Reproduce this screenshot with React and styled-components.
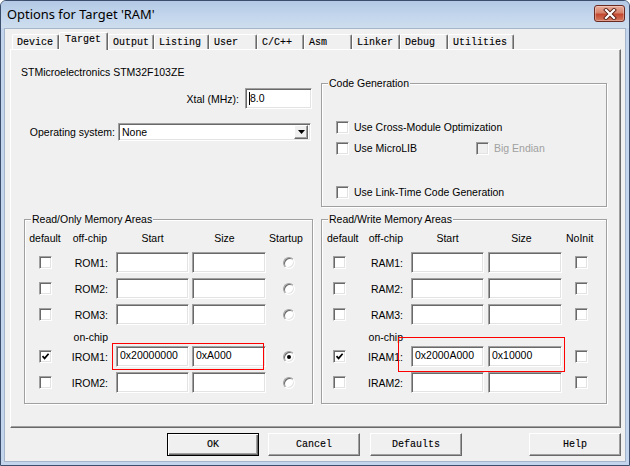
import React from 'react';
import styled, { createGlobalStyle, css } from 'styled-components';

const UI = `"Liberation Sans", Arial, sans-serif`;
const MONO = `"Liberation Mono", "Courier New", monospace`;

const GlobalStyle = createGlobalStyle`
  *, *::before, *::after { box-sizing: border-box; }
  html, body { margin: 0; padding: 0; background: #ffffff; }
  body { font-family: ${UI}; font-size: 10.5px; color: #000; }
`;

const Window = styled.div`
  width: 630px;
  height: 466px;
  display: flex;
  flex-direction: column;
  border: 1px solid #3b4f6c;
  border-radius: 6px 6px 0 0;
  overflow: hidden;
  background: #c2d5ec;
`;

const TitleBar = styled.div`
  flex: none;
  height: 27px;
  display: flex;
  align-items: flex-start;
  justify-content: space-between;
  padding: 0 4px 0 6px;
  background: linear-gradient(to bottom, #b3c9e5 0%, #c4d7ed 60%, #cddded 100%);
`;

const Title = styled.div`
  font-family: "Noto Sans", ${UI};
  font-size: 12.9px;
  line-height: 26px;
  color: #000;
`;

const CloseBtn = styled.div`
  margin-top: 4px;
  width: 31px;
  height: 17px;
  display: flex;
  align-items: center;
  justify-content: center;
  border: 1px solid #6a2a22;
  border-radius: 3px;
  background: linear-gradient(to bottom, #e9ad9b 0%, #d6836c 45%, #c3472f 55%, #d47a60 100%);
  box-shadow: inset 0 0 0 1px rgba(255, 255, 255, 0.3);
`;

const Frame = styled.div`
  flex: 1;
  display: flex;
  padding: 0 3px 3px;
`;

const Client = styled.div`
  flex: 1;
  display: flex;
  flex-direction: column;
  border: 1px solid #a6b6ca;
  background: #f0f0f0;
  padding: 3px 4px 5px 5px;
`;

const TabStrip = styled.div`
  flex: none;
  height: 17px;
  display: flex;
  align-items: flex-end;
  padding-left: 2px;
  position: relative;
  z-index: 1;
`;

const Tab = styled.div`
  flex: none;
  width: ${(p) => p.$w}px;
  height: 15px;
  background: #f0f0f0;
  border-top: 1px solid #fff;
  border-left: 1px solid #fff;
  border-right: 1px solid #696969;
  border-radius: 2px 2px 0 0;
  box-shadow: inset -1px 0 0 #a0a0a0;
  padding-left: 4px;
  font-family: ${MONO};
  font-size: 10px;
  line-height: 15px;
  color: #000;
  white-space: nowrap;
  -webkit-text-stroke: 0.12px #000;
  ${(p) =>
    p.$active &&
    css`
      height: 18px;
      margin-bottom: -1px;
      padding-left: 5px;
      line-height: 14px;
    `}
`;

const Panel = styled.div`
  flex: 1;
  display: flex;
  flex-direction: column;
  border-style: solid;
  border-width: 1px;
  border-color: #fff #696969 #696969 #fff;
  box-shadow: inset -1px -1px 0 #a0a0a0;
  padding: 0 13px;
`;

const Columns = styled.div`
  display: grid;
  grid-template-columns: 289px 286px;
  column-gap: 8px;
  align-items: start;
  margin-top: ${(p) => p.$mt || 0}px;
`;

const LeftTop = styled.div`
  display: flex;
  flex-direction: column;
`;

const DeviceName = styled.div`
  margin: 15px 0 0 -3px;
  line-height: 14px;
  white-space: nowrap;
`;

const FormRow = styled.div`
  display: flex;
  align-items: center;
  justify-content: flex-end;
  gap: ${(p) => p.$gap}px;
  margin-top: ${(p) => p.$mt}px;
  padding-right: ${(p) => p.$pr}px;
  height: ${(p) => p.$h}px;
`;

const FormLabel = styled.span`
  white-space: nowrap;
  line-height: 14px;
`;

const sunken = css`
  border: 1px solid;
  border-color: #a0a0a0 #fff #fff #a0a0a0;
  box-shadow: inset 1px 1px 0 #696969, inset -1px -1px 0 #e3e3e3;
`;

const Field = styled.div`
  flex: none;
  width: ${(p) => p.$w}px;
  height: ${(p) => p.$h || 21}px;
  background: #fff;
  ${sunken};
  display: flex;
  align-items: center;
  padding: 0 2px ${(p) => p.$pb ?? 3}px 3px;
  white-space: nowrap;
  line-height: 14px;
`;

const Caret = styled.span`
  width: 1px;
  height: 13px;
  background: #000;
`;

const Select = styled.div`
  flex: none;
  width: 193px;
  height: 18px;
  background: #fff;
  ${sunken};
  display: flex;
  align-items: center;
  justify-content: space-between;
  padding: 2px 2px 2px 3px;
  line-height: 14px;
`;

const DropBtn = styled.span`
  width: 14px;
  height: 14px;
  background: #f0f0f0;
  border-style: solid;
  border-width: 1px;
  border-color: #fff #696969 #696969 #fff;
  box-shadow: inset -1px -1px 0 #a0a0a0;
  display: flex;
  align-items: center;
  justify-content: center;
`;

const GroupBox = styled.div`
  position: relative;
  height: ${(p) => p.$h}px;
  margin-top: ${(p) => p.$mt || 0}px;
  border: 1px solid #a0a0a0;
  box-shadow: inset 1px 1px 0 #fff, 1px 1px 0 #fff;
  padding: ${(p) => p.$pad};
`;

const Legend = styled.span`
  position: absolute;
  top: -7px;
  left: 6px;
  padding: 0 1px;
  background: #f0f0f0;
  line-height: 13px;
  white-space: nowrap;
`;

const CheckList = styled.div`
  display: flex;
  flex-direction: column;
`;

const CheckRow = styled.div`
  display: flex;
  align-items: center;
  height: 13px;
  margin-top: ${(p) => p.$mt || 0}px;
`;

const CheckItem = styled.div`
  display: flex;
  align-items: center;
  gap: 5px;
  width: ${(p) => (p.$w ? `${p.$w}px` : 'auto')};
  line-height: 13px;
  white-space: nowrap;
  color: ${(p) => (p.$disabled ? '#a0a0a0' : '#000')};
`;

const Box = styled.span`
  flex: none;
  width: 13px;
  height: 13px;
  display: inline-flex;
  align-items: center;
  justify-content: center;
  background: ${(p) => (p.$disabled ? '#f0f0f0' : '#fff')};
  ${sunken};
  justify-self: ${(p) => p.$js || 'auto'};
  margin-left: ${(p) => p.$ml || 0}px;
`;

const Radio = styled.span`
  width: 12px;
  height: 12px;
  border-radius: 50%;
  border: 1px solid;
  border-color: #a0a0a0 #fff #fff #a0a0a0;
  box-shadow: inset 1px 1px 0 #696969, inset -1px -1px 0 #e3e3e3;
  background: #fff;
  display: flex;
  align-items: center;
  justify-content: center;
  justify-self: center;
  &::after {
    content: '';
    width: 4px;
    height: 4px;
    border-radius: 50%;
    background: ${(p) => (p.$on ? '#000' : 'transparent')};
  }
`;

const MemGrid = styled.div`
  display: grid;
  grid-template-columns: ${(p) => p.$cols};
  grid-template-rows: 17px 21px 21px 21px 11px 21px 21px;
  row-gap: 5px;
  align-items: center;
`;

const HeadCell = styled.div`
  align-self: start;
  line-height: 16px;
  white-space: nowrap;
  text-align: ${(p) => p.$align || 'center'};
  width: ${(p) => (p.$w ? `${p.$w}px` : 'auto')};
  padding: 0 ${(p) => p.$pr || 0}px 0 ${(p) => p.$pl || 0}px;
`;

const RowLabel = styled.div`
  text-align: right;
  padding-right: 8px;
  line-height: 14px;
  white-space: nowrap;
`;

const OnChip = styled.div`
  grid-column: 2;
  align-self: start;
  text-align: right;
  padding-right: 8px;
  line-height: 14px;
  white-space: nowrap;
`;

const RowRest = styled.div`
  grid-column: 3 / -1;
`;

const Highlight = styled.div`
  position: absolute;
  left: ${(p) => p.$x}px;
  top: ${(p) => p.$y}px;
  width: ${(p) => p.$w}px;
  height: ${(p) => p.$h}px;
  border: 1px solid #ff0000;
  pointer-events: none;
`;

const ButtonRow = styled.div`
  flex: none;
  display: flex;
  justify-content: flex-end;
  margin-top: 5px;
  height: 23px;
`;

const Button = styled.div`
  width: 92px;
  height: 23px;
  margin-left: ${(p) => p.$ml || 0}px;
  display: flex;
  align-items: center;
  justify-content: center;
  background: #f0f0f0;
  font-family: ${MONO};
  font-size: 10px;
  color: #000;
  -webkit-text-stroke: 0.12px #000;
  border-style: solid;
  border-width: 1px;
  border-color: #fff #696969 #696969 #fff;
  box-shadow: inset -1px -1px 0 #a0a0a0;
  ${(p) =>
    p.$default &&
    css`
      border-color: #000;
      box-shadow: inset 1px 1px 0 #fff, inset -1px -1px 0 #696969, inset -2px -2px 0 #a0a0a0;
    `}
`;

const Check = () => (
  <svg width="9" height="9" viewBox="0 0 9 9">
    <path d="M1.5 4.2 L3.6 6.4 L7.6 1.8" fill="none" stroke="#000" strokeWidth="1.7" />
  </svg>
);

const CheckBox = ({ checked, disabled, ml, js }) => (
  <Box $disabled={disabled} $ml={ml} $js={js}>
    {checked ? <Check /> : null}
  </Box>
);

const tabs = [
  ['Device', 47],
  ['Target', 49, true],
  ['Output', 46],
  ['Listing', 55],
  ['User', 48],
  ['C/C++', 47],
  ['Asm', 48],
  ['Linker', 48],
  ['Debug', 48],
  ['Utilities', 66],
];

function MemoryGroup({ title, cols, padLeft, headers, prefix, hl, last }) {
  const rows = [
    { label: `${prefix}1:` },
    { label: `${prefix}2:` },
    { label: `${prefix}3:` },
    'onchip',
    { label: `I${prefix}1:`, checked: true, ...hl.values },
    { label: `I${prefix}2:` },
  ];
  return (
    <GroupBox $h={185} $pad={`10px 0 0 ${padLeft}px`}>
      <Legend>{title}</Legend>
      <MemGrid $cols={cols}>
        {headers.map((h) => (
          <HeadCell key={h.t} $align={h.align} $w={h.w} $pl={h.pl} $pr={h.pr}>
            {h.t}
          </HeadCell>
        ))}
        {rows.map((r, i) =>
          r === 'onchip' ? (
            <React.Fragment key={i}>
              <OnChip>on-chip</OnChip>
              <RowRest />
            </React.Fragment>
          ) : (
            <React.Fragment key={i}>
              <CheckBox checked={r.checked} js="center" />
              <RowLabel>{r.label}</RowLabel>
              <Field $w={73}>{r.start || ''}</Field>
              <Field $w={74}>{r.size || ''}</Field>
              {last === 'radio' ? (
                <Radio $on={r.checked} />
              ) : (
                <CheckBox js="start" ml={13} />
              )}
            </React.Fragment>
          )
        )}
      </MemGrid>
      <Highlight $x={hl.x} $y={hl.y} $w={hl.w} $h={hl.h} />
    </GroupBox>
  );
}

export default function App() {
  return (
    <>
      <GlobalStyle />
      <Window>
        <TitleBar>
          <Title>Options for Target 'RAM'</Title>
          <CloseBtn>
            <svg width="16" height="12" viewBox="0 0 16 12">
              <path d="M4 2 L12 10 M12 2 L4 10" stroke="#5a2016" strokeWidth="4" strokeLinecap="square" />
              <path d="M4 2 L12 10 M12 2 L4 10" stroke="#ffffff" strokeWidth="2.2" strokeLinecap="square" />
            </svg>
          </CloseBtn>
        </TitleBar>
        <Frame>
          <Client>
            <TabStrip>
              {tabs.map(([t, w, a]) => (
                <Tab key={t} $w={w} $active={a}>
                  {t}
                </Tab>
              ))}
            </TabStrip>
            <Panel>
              <Columns>
                <LeftTop>
                  <DeviceName>STMicroelectronics STM32F103ZE</DeviceName>
                  <FormRow $gap={6} $mt={9} $pr={1} $h={21}>
                    <FormLabel>Xtal (MHz):</FormLabel>
                    <Field $w={67} $pb={1}>
                      <Caret />
                      8.0
                    </Field>
                  </FormRow>
                  <FormRow $gap={3} $mt={14} $pr={2} $h={18}>
                    <FormLabel>Operating system:</FormLabel>
                    <Select>
                      <span>None</span>
                      <DropBtn>
                        <svg width="7" height="4" viewBox="0 0 7 4">
                          <path d="M0 0 H7 L3.5 4 Z" fill="#000" />
                        </svg>
                      </DropBtn>
                    </Select>
                  </FormRow>
                </LeftTop>
                <GroupBox $h={124} $mt={33} $pad="37px 0 0 14px">
                  <Legend>Code Generation</Legend>
                  <CheckList>
                    <CheckRow>
                      <CheckItem>
                        <CheckBox />
                        Use Cross-Module Optimization
                      </CheckItem>
                    </CheckRow>
                    <CheckRow $mt={8}>
                      <CheckItem $w={140}>
                        <CheckBox />
                        Use MicroLIB
                      </CheckItem>
                      <CheckItem $disabled>
                        <CheckBox disabled />
                        Big Endian
                      </CheckItem>
                    </CheckRow>
                    <CheckRow $mt={31}>
                      <CheckItem>
                        <CheckBox />
                        Use Link-Time Code Generation
                      </CheckItem>
                    </CheckRow>
                  </CheckList>
                </GroupBox>
              </Columns>
              <Columns $mt={12}>
                <MemoryGroup
                  title="Read/Only Memory Areas"
                  prefix="ROM"
                  cols="34px 54px 76px 74px 1fr"
                  padLeft={3}
                  last="radio"
                  headers={[
                    { t: 'default' },
                    { t: 'off-chip', align: 'right', pr: 9 },
                    { t: 'Start', w: 73 },
                    { t: 'Size', w: 65 },
                    { t: 'Startup', align: 'left', pl: 3 },
                  ]}
                  hl={{ x: 87, y: 123, w: 152, h: 27, values: { start: '0x20000000', size: '0xA000' } }}
                />
                <MemoryGroup
                  title="Read/Write Memory Areas"
                  prefix="RAM"
                  cols="34px 55px 77px 74px 1fr"
                  padLeft={0}
                  last="check"
                  headers={[
                    { t: 'default', pl: 5 },
                    { t: 'off-chip', align: 'right', pr: 8 },
                    { t: 'Start', w: 73 },
                    { t: 'Size', w: 67 },
                    { t: 'NoInit', align: 'left', pl: 4 },
                  ]}
                  hl={{ x: 76, y: 117, w: 167, h: 35, values: { start: '0x2000A000', size: '0x10000' } }}
                />
              </Columns>
            </Panel>
            <ButtonRow>
              <Button $default>OK</Button>
              <Button $ml={9}>Cancel</Button>
              <Button $ml={10}>Defaults</Button>
              <Button $ml={67}>Help</Button>
            </ButtonRow>
          </Client>
        </Frame>
      </Window>
    </>
  );
}
